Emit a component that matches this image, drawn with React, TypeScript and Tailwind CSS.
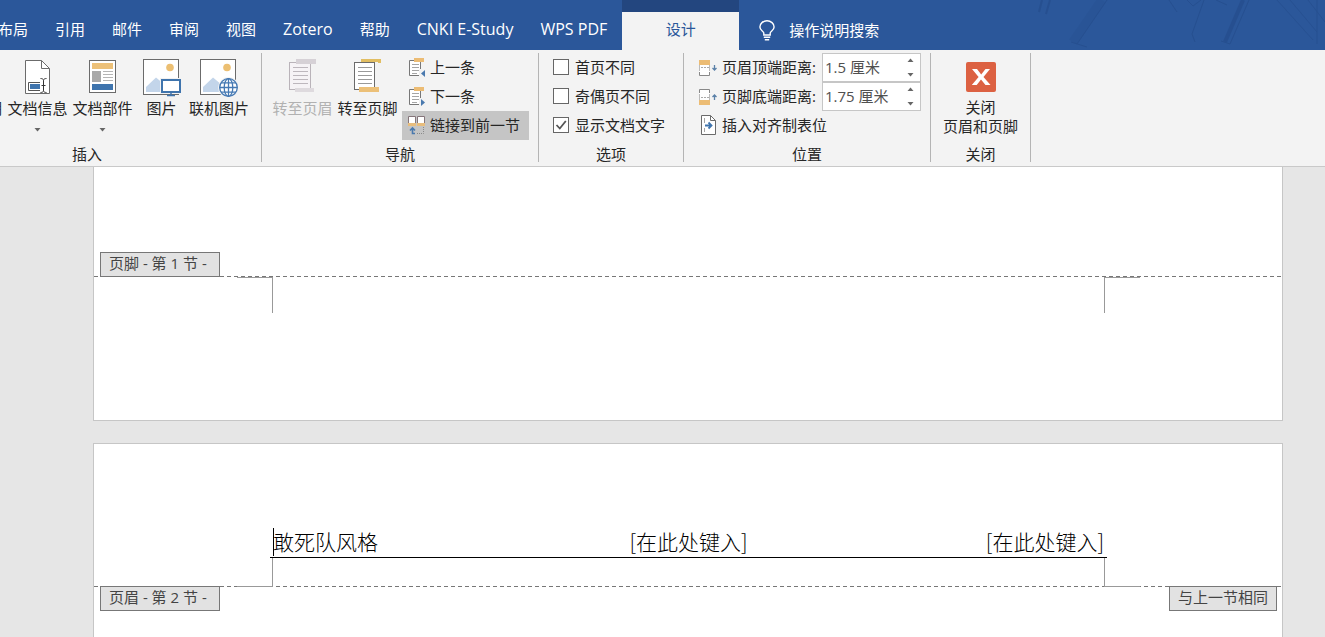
import React from "react";

const tabs = ["布局", "引用", "邮件", "审阅", "视图", "Zotero", "帮助", "CNKI E-Study", "WPS PDF"];

const DocInfoIcon = () => (
  <svg width="26" height="36" viewBox="0 0 26 36" fill="none">
    <path d="M.5 1.5H16.5L24.5 9.5V34.5H.5Z" fill="#fff" stroke="#6b6b6b" />
    <path d="M16.5 1.5V9.5H24.5" stroke="#6b6b6b" />
    <path d="M15 23.5H3.5V31.5H15" stroke="#555" />
    <rect x="5" y="25" width="10" height="5" fill="#3f74ad" />
    <path d="M15.5 19.5C17 19.5 18.5 20 18.5 21.5V31.5C18.5 33 17 33.5 15.5 33.5M21.5 19.5C20 19.5 18.5 20 18.5 21.5M18.5 31.5C18.5 33 20 33.5 21.5 33.5M16.5 26.5H20.5" stroke="#333" />
  </svg>
);

const DocPartsIcon = () => (
  <svg width="28" height="36" viewBox="0 0 28 36" fill="none">
    <rect x=".5" y="1.5" width="26" height="32" fill="#fff" stroke="#6b6b6b" />
    <rect x="3" y="4" width="21" height="6" fill="#ecc078" />
    <rect x="3" y="12" width="9" height="11" fill="#a9a9a9" />
    <path d="M14 12.5H24M14 15.5H24M14 18.5H24M14 21.5H24" stroke="#b5b5b5" />
    <rect x="3" y="25" width="21" height="6" fill="#3f74ad" />
  </svg>
);

const PictureFrame = () => (
  <>
    <rect x=".5" y=".5" width="35" height="35" fill="#fff" stroke="#6b6b6b" />
    <circle cx="27" cy="8.5" r="3.8" fill="#ecbf72" />
    <path d="M3 33V28L13 18.5L19 23.5V33Z" fill="#c3d5ea" />
  </>
);

const PictureIcon = () => (
  <svg width="38" height="39" viewBox="0 0 38 39" fill="none">
    <PictureFrame />
    <rect x="17" y="19" width="22" height="16" fill="#f2f2f2" />
    <rect x="19" y="21" width="18" height="12" fill="#fff" stroke="#3f74ad" strokeWidth="2" />
    <path d="M28 34V36M24 36.5H32" stroke="#3f74ad" strokeWidth="1.5" />
  </svg>
);

const OnlinePictureIcon = () => (
  <svg width="38" height="39" viewBox="0 0 38 39" fill="none">
    <PictureFrame />
    <circle cx="28.5" cy="28.5" r="10.5" fill="#f2f2f2" />
    <g stroke="#4579b3" strokeWidth="1.3">
      <circle cx="28.5" cy="28.5" r="8.8" fill="#fff" />
      <ellipse cx="28.5" cy="28.5" rx="4.3" ry="8.8" />
      <path d="M28.5 19.7V37.3M19.7 28.5H37.3M21 23.8H36M21 33.2H36" />
    </g>
  </svg>
);

const GotoHeaderIcon = () => (
  <svg width="28" height="34" viewBox="0 0 28 34" fill="none">
    <rect x=".5" y="3.5" width="21" height="27" fill="#f6f3f6" stroke="#b9b3b9" />
    <path d="M4 8.5H19M4 12.5H19M4 16.5H19M4 20.5H19M4 24.5H19" stroke="#bdb7bd" />
    <rect x="7" y="0" width="20" height="5" fill="#d6d1d6" />
    <rect x="6" y="29" width="19" height="4" fill="#dedade" />
  </svg>
);

const GotoFooterIcon = () => (
  <svg width="28" height="34" viewBox="0 0 28 34" fill="none">
    <rect x=".5" y="3.5" width="20" height="27" fill="#fff" stroke="#6b6b6b" />
    <path d="M4 8.5H18M4 12.5H18M4 16.5H18M4 20.5H18M4 24.5H18" stroke="#999" />
    <path d="M7 0H27V4H24V3H7Z" fill="#e2be62" />
    <rect x="5" y="28" width="20" height="5" fill="#ecc078" />
  </svg>
);

const StepIcon = ({ next }: { next?: boolean }) => (
  <svg width="18" height="20" viewBox="0 0 18 20" fill="none">
    <path d="M6 3.5H1.5V18.5H12.5V5" fill="#fff" stroke="#777" />
    <path d="M4 7.5H11M4 10.5H11M4 13.5H11M4 16.5H9" stroke="#a5a5a5" />
    <rect x="6" y="1" width="10" height="4" fill="#ecbc74" />
    <rect x="11" y="12" width="7" height="8" fill="#f2f2f2" />
    <path d={next ? "M13 13L17 16.5L13 20Z" : "M17 13L13 16.5L17 20Z"} fill="#4a79ae" />
  </svg>
);

const LinkPreviousIcon = () => (
  <svg width="18" height="20" viewBox="0 0 18 20" fill="none">
    <path d="M.5 8V1.5H7.5V8M9.5 8V1.5H16.5V8" fill="#fff" stroke="#85757a" />
    <rect x="0" y="8" width="8" height="3" fill="#e8bd7d" />
    <rect x="9" y="8" width="8" height="3" fill="#e8bd7d" />
    <path d="M2 15.5L4.5 13L7 15.5M4.5 13V18.5H7" stroke="#4a79ae" strokeWidth="1.6" />
    <path d="M9 18.5H15.5V12" stroke="#888" strokeDasharray="1 1" />
  </svg>
);

const DistanceIcon = ({ footer }: { footer?: boolean }) => (
  <svg width="20" height="18" viewBox="0 0 20 18" fill="none">
    <rect x="1" y="2" width="11" height="14" fill="#fff" />
    <path
      d={footer ? "M1.5 5V1.5H11.5V5" : "M1.5 13V16.5H11.5V13"}
      stroke="#888"
    />
    <path
      d={footer ? "M1.5 6V12M11.5 6V12" : "M1.5 6V12M11.5 6V12"}
      stroke="#bbb"
    />
    <path d={footer ? "M3 9.5H11" : "M3 8.5H11"} stroke="#aaa" strokeDasharray="2 1" />
    <rect x="1" y={footer ? 12 : 1} width="11" height="5" fill="#ecbc74" />
    <path
      d={footer ? "M16.5 12V7M14.5 9L16.5 7L18.5 9" : "M16.5 6V11M14.5 9L16.5 11L18.5 9"}
      stroke="#5b81a8"
      strokeWidth="1.3"
    />
  </svg>
);

const AlignTabIcon = () => (
  <svg width="20" height="20" viewBox="0 0 20 20" fill="none">
    <path d="M3.5 .5H12.5L17.5 5.5V19.5H3.5Z" fill="#fff" stroke="#6b6b6b" />
    <path d="M12.5 .5V5.5H17.5" stroke="#6b6b6b" />
    <path d="M6.5 3V8M6.5 13V17" stroke="#a5a5a5" />
    <path d="M7 10.5H13M10.5 7.5L13.5 10.5L10.5 13.5" stroke="#3f74ad" strokeWidth="1.8" />
  </svg>
);

const CloseIcon = () => (
  <svg width="30" height="30" viewBox="0 0 30 30">
    <rect width="30" height="30" rx="2" fill="#dc6142" />
    <path d="M6 7H11L15.2 12.6L19.5 7H24L17.5 15L24.5 23H19.5L15 17.4L10.7 23H5.8L12.6 15Z" fill="#fff" />
  </svg>
);

const BulbIcon = () => (
  <svg width="16" height="21" viewBox="0 0 16 21" fill="none" stroke="#fff" strokeWidth="1.4">
    <path d="M4.8 15V13C4.8 11.5 .9 10.5 .9 7A7.1 6.2 0 0 1 15.1 7C15.1 10.5 11.2 11.5 11.2 13V15Z" />
    <path d="M4.8 17.3H11.2M5.8 19.8H10.2" />
  </svg>
);

const Caret = ({ up }: { up?: boolean }) => (
  <svg width="7" height="4" viewBox="0 0 7 4" fill="#666">
    <path d={up ? "M.5 4L3.5 .5L6.5 4Z" : "M.5 0L3.5 3.5L6.5 0Z"} />
  </svg>
);

interface BigButtonProps {
  icon: React.ReactNode;
  label: string;
  width: string;
  menu?: boolean;
  disabled?: boolean;
}

const BigButton: React.FC<BigButtonProps> = ({ icon, label, width, menu, disabled }) => (
  <button
    disabled={disabled}
    className={`${width} flex shrink-0 flex-col items-center whitespace-nowrap disabled:text-[#b1b1b1]`}
  >
    <span className="flex h-[45px] items-start pt-1.5">{icon}</span>
    <span>{label}</span>
    {menu && <span className="flex h-6 items-center"><Caret /></span>}
  </button>
);

interface GroupProps {
  title: string;
  className: string;
  titleClass?: string;
  children: React.ReactNode;
}

const Group: React.FC<GroupProps> = ({ title, className, titleClass = "", children }) => (
  <section className={`${className} flex shrink-0 flex-col border-r border-[#b4b4b4]`}>
    <div className="flex h-[91px] shrink-0">{children}</div>
    <h2 className={`${titleClass} text-center`}>{title}</h2>
  </section>
);

const CheckRow = ({ label, checked }: { label: string; checked?: boolean }) => (
  <label className="relative flex h-[29px] items-center gap-1.5 pb-0.5">
    <input
      type="checkbox"
      defaultChecked={checked}
      className="peer size-4 appearance-none border border-[#666] bg-white"
    />
    <svg
      className="absolute left-0.5 hidden peer-checked:block"
      width="12"
      height="12"
      viewBox="0 0 12 12"
      fill="none"
    >
      <path d="M1.5 6L4.8 9.5L10.8 2" stroke="#555" strokeWidth="1.8" />
    </svg>
    {label}
  </label>
);

interface DistanceRowProps {
  id: string;
  label: string;
  value: string;
  footer?: boolean;
}

const DistanceRow: React.FC<DistanceRowProps> = ({ id, label, value, footer }) => (
  <div className="flex h-[29px] items-center">
    <DistanceIcon footer={footer} />
    <label htmlFor={id} className="w-[104px] shrink-0 pb-0.5 pl-1 whitespace-nowrap">
      {label}
    </label>
    <div className="flex h-full w-[99px] border border-[#c6c6c6] bg-white">
      <input id={id} defaultValue={value} className="w-[78px] pb-0.5 pl-0.5 text-[#505050] outline-none" />
      <div className="flex flex-1 flex-col items-center justify-between py-0.5">
        <button aria-label="增大" className="flex h-2 items-center"><Caret up /></button>
        <button aria-label="减小" className="flex h-2 items-center"><Caret /></button>
      </div>
    </div>
  </div>
);

const Dashes = () => (
  <div className="h-px bg-[repeating-linear-gradient(90deg,#777_0_4px,transparent_4px_7px)]" />
);

const Tag = ({ children, className = "" }: { children: React.ReactNode; className?: string }) => (
  <span
    className={`${className} relative border border-[#777] bg-[#e2e2e2] px-2 pb-0.5 leading-[21px] whitespace-nowrap text-[#444]`}
  >
    {children}
  </span>
);

const HeaderArt = () => (
  <svg
    className="absolute top-0 right-0"
    width="290"
    height="50"
    viewBox="0 0 290 50"
    fill="none"
    stroke="#234a88"
    opacity=".55"
  >
    <path d="M7 0L4 12M15 0L11 14" strokeWidth="2" />
    <path d="M67 0L38 42" strokeWidth="9" opacity=".35" />
    <path d="M72 0L42 44M36 42L52 47" />
    <path d="M134 0L142 12M152 0L158 6L166 0" />
    <path d="M169 0L157 34L160 42M181 0L192 5" />
    <path d="M208 0L190 42" strokeWidth="4" />
    <path d="M214 0L195 44L186 41" />
    <path d="M242 0L278 40M255 0L282 32M273 0L290 22M282 0V44" opacity=".8" />
  </svg>
);

export default function App() {
  return (
    <div className="flex min-h-screen flex-col overflow-hidden bg-[#e6e6e6] font-['Open_Sans','Noto_Sans_CJK_SC',sans-serif] text-[15px] leading-5 text-[#262626]">
      <header className="relative flex h-[50px] bg-[#2b579a] text-white">
        <HeaderArt />
        <nav className="-ml-0.5 flex shrink-0 gap-[27px] pt-2 pr-[15px]">
          {tabs.map((tab) => (
            <button key={tab} className={`whitespace-nowrap ${/[A-Z]/.test(tab) ? "text-base" : ""}`}>
              {tab}
            </button>
          ))}
        </nav>
        <button className="w-[117px] shrink-0 border-t-12 border-[#23467f] bg-[#f3f3f3] pb-1 text-[#2b579a]">
          设计
        </button>
        <button className="flex shrink-0 items-center gap-3.5 pt-2.5 pl-5">
          <BulbIcon />
          操作说明搜索
        </button>
      </header>

      <div className="flex h-[117px] border-b border-[#c9c9c9] bg-[#f3f3f3] pt-[3px] pb-1">
        <Group title="插入" className="w-[262px]" titleClass="w-[174px]">
          <button className="mr-[3px] flex w-0.5 shrink-0 justify-end overflow-hidden pt-[45px] whitespace-nowrap">
            日期
          </button>
          <BigButton icon={<DocInfoIcon />} label="文档信息" width="w-[65px]" menu />
          <BigButton icon={<DocPartsIcon />} label="文档部件" width="w-[65px]" menu />
          <BigButton icon={<PictureIcon />} label="图片" width="w-[53px]" />
          <BigButton icon={<OnlinePictureIcon />} label="联机图片" width="w-[62px]" />
        </Group>

        <Group title="导航" className="w-[277px]">
          <div className="flex pr-0.5 pl-2">
            <BigButton icon={<GotoHeaderIcon />} label="转至页眉" width="w-[65px]" disabled />
            <BigButton icon={<GotoFooterIcon />} label="转至页脚" width="w-[65px]" />
          </div>
          <div className="w-[127px]">
            <button className="flex h-[29px] w-full items-center gap-1 pb-0.5 pl-1.5">
              <StepIcon />
              上一条
            </button>
            <button className="flex h-[29px] w-full items-center gap-1 pb-0.5 pl-1.5">
              <StepIcon next />
              下一条
            </button>
            <button className="flex h-[29px] w-full items-center gap-1 bg-[#c5c5c5] pb-0.5 pl-1.5">
              <LinkPreviousIcon />
              链接到前一节
            </button>
          </div>
        </Group>

        <Group title="选项" className="w-[145px]">
          <div className="pl-3.5">
            <CheckRow label="首页不同" />
            <CheckRow label="奇偶页不同" />
            <CheckRow label="显示文档文字" checked />
          </div>
        </Group>

        <Group title="位置" className="w-[247px]">
          <div className="pl-3.5">
            <DistanceRow id="header-distance" label="页眉顶端距离:" value="1.5 厘米" />
            <DistanceRow id="footer-distance" label="页脚底端距离:" value="1.75 厘米" footer />
            <button className="flex h-[29px] items-center gap-1 pb-0.5">
              <AlignTabIcon />
              插入对齐制表位
            </button>
          </div>
        </Group>

        <Group title="关闭" className="w-[100px]">
          <button className="flex w-full flex-col items-center pt-[9px] leading-[19px]">
            <CloseIcon />
            <span className="pt-1.5">关闭</span>
            <span>页眉和页脚</span>
          </button>
        </Group>
      </div>

      <main className="mr-[42px] ml-[93px] flex flex-1 flex-col gap-[22px]">
        <article className="h-[254px] border-x border-b border-[#c6c6c6] bg-white">
          <div className="-mb-px flex px-1.5 pt-[85px]">
            <Tag className="w-[120px]">页脚 - 第 1 节 -</Tag>
          </div>
          <Dashes />
          <div className="flex justify-between pr-[142px] pl-[143px]">
            <div className="h-9 w-9 border-t border-r border-[#999]" />
            <div className="h-9 w-9 border-t border-l border-[#999]" />
          </div>
        </article>

        <article className="flex-1 border border-b-0 border-[#c6c6c6] bg-white">
          <div className="mr-[175px] ml-44 border-b border-black px-[3px] pt-[84px]">
            <div className="relative grid h-[29px] grid-cols-3 items-center pb-1 font-['Noto_Sans_CJK_SC',sans-serif] text-[21px] font-light whitespace-nowrap text-black">
              <span className="absolute top-0 left-0 h-7 w-px bg-black" />
              <span>敢死队风格</span>
              <span className="text-center">[在此处键入]</span>
              <span className="text-right">[在此处键入]</span>
            </div>
          </div>
          <div className="-mb-px flex justify-between pr-[142px] pl-[143px]">
            <div className="h-[29px] w-9 border-r border-b border-[#999]" />
            <div className="h-[29px] w-9 border-b border-l border-[#999]" />
          </div>
          <Dashes />
          <div className="-mt-px flex justify-between pr-[5px] pl-1.5">
            <Tag className="w-[120px]">页眉 - 第 2 节 -</Tag>
            <Tag>与上一节相同</Tag>
          </div>
        </article>
      </main>
    </div>
  );
}
